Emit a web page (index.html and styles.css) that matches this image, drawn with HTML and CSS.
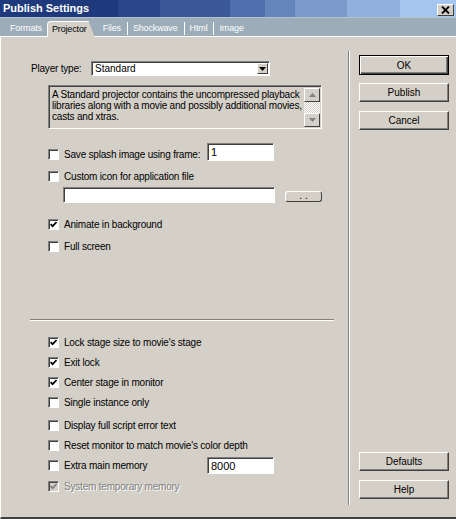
FILE: index.html
```html
<!DOCTYPE html>
<html>
<head>
    <meta name="viewport" content="width=device-width, initial-scale=1.0">
    <link rel="stylesheet" href="styles.css">
</head>
<body>

<div class="window">
    <div class="titlebar">
        <span class="title">Publish Settings</span>
        <span class="close">
            <svg width="9" height="8" viewBox="0 0 9 8"><path d="M1 0.5 L8 7.5 M8 0.5 L1 7.5" stroke="#000" stroke-width="1.8"/></svg>
        </span>
    </div>

    <div class="tabs">
        <span class="tab first">Formats</span>
        <span class="tab active">Projector</span>
        <span class="tab files">Files</span><span class="sep"></span>
        <span class="tab">Shockwave</span><span class="sep"></span>
        <span class="tab">Html</span><span class="sep"></span>
        <span class="tab">Image</span>
    </div>

    <div class="main">
        <div class="left">
            <div class="player">
                <span class="player-label">Player type:</span>
                <div class="select">
                    <span class="select-text">Standard</span>
                    <span class="select-btn">
                        <svg width="7" height="4" viewBox="0 0 7 4"><path d="M0 0 H7 L3.5 4 Z" fill="#000"/></svg>
                    </span>
                </div>
            </div>

            <div class="desc">
                <div class="desc-text">A Standard projector contains the uncompressed playback libraries along with a movie and possibly additional movies, casts and xtras.</div>
                <div class="scroll">
                    <span class="scroll-btn"><svg width="7" height="4" viewBox="0 0 7 4"><path d="M0 4 H7 L3.5 0 Z" fill="#808080"/></svg></span>
                    <span class="scroll-track"></span>
                    <span class="scroll-btn"><svg width="7" height="4" viewBox="0 0 7 4"><path d="M0 0 H7 L3.5 4 Z" fill="#808080"/></svg></span>
                </div>
            </div>

            <div class="check splash">
                <span class="box"></span>
                <span class="label wide">Save splash image using frame:</span>
                <span class="field up">1</span>
            </div>
            <div class="check custom">
                <span class="box"></span>
                <span class="label">Custom icon for application file</span>
            </div>
            <div class="path-row">
                <span class="path-field"></span>
                <span class="browse">. .</span>
            </div>
            <div class="check animate">
                <span class="box"><svg width="7" height="7" viewBox="0 0 7 7"><polyline points="0.6,3.2 2.6,5.2 6.6,1" fill="none" stroke="#000" stroke-width="1.7"/></svg></span>
                <span class="label">Animate in background</span>
            </div>
            <div class="check gap11">
                <span class="box"></span>
                <span class="label">Full screen</span>
            </div>

            <div class="rule"></div>

            <div class="check lock">
                <span class="box"><svg width="7" height="7" viewBox="0 0 7 7"><polyline points="0.6,3.2 2.6,5.2 6.6,1" fill="none" stroke="#000" stroke-width="1.7"/></svg></span>
                <span class="label">Lock stage size to movie's stage</span>
            </div>
            <div class="check gap9">
                <span class="box"><svg width="7" height="7" viewBox="0 0 7 7"><polyline points="0.6,3.2 2.6,5.2 6.6,1" fill="none" stroke="#000" stroke-width="1.7"/></svg></span>
                <span class="label">Exit lock</span>
            </div>
            <div class="check gap9">
                <span class="box"><svg width="7" height="7" viewBox="0 0 7 7"><polyline points="0.6,3.2 2.6,5.2 6.6,1" fill="none" stroke="#000" stroke-width="1.7"/></svg></span>
                <span class="label">Center stage in monitor</span>
            </div>
            <div class="check gap9">
                <span class="box"></span>
                <span class="label">Single instance only</span>
            </div>
            <div class="check gap12">
                <span class="box"></span>
                <span class="label">Display full script error text</span>
            </div>
            <div class="check gap9">
                <span class="box"></span>
                <span class="label">Reset monitor to match movie's color depth</span>
            </div>
            <div class="check gap9">
                <span class="box"></span>
                <span class="label wide">Extra main memory</span>
                <span class="field">8000</span>
            </div>
            <div class="check gap10 disabled">
                <span class="box"><svg width="7" height="7" viewBox="0 0 7 7"><polyline points="0.6,3.2 2.6,5.2 6.6,1" fill="none" stroke="#808080" stroke-width="1.7"/></svg></span>
                <span class="label">System temporary memory</span>
            </div>
        </div>

        <div class="right">
            <div class="btn-group">
                <div class="btn default">OK</div>
                <div class="btn">Publish</div>
                <div class="btn">Cancel</div>
            </div>
            <div class="btn-group">
                <div class="btn">Defaults</div>
                <div class="btn">Help</div>
            </div>
        </div>
    </div>
</div>

</body>
</html>
```

FILE: styles.css
```css
* {box-sizing: border-box;}

body {
    margin: 0;
    font-family: "Liberation Sans", Arial, sans-serif;
    font-size: 10px;
    color: #000;
    background-color: #d4d0c8;
}

.window {
    width: 456px;
    height: 519px;
    border-left: 1px solid #ffffff;
    border-bottom: 2px solid #404040;
    background-color: #d4d0c8;
}

/* title bar with the stepped blue fade */
.titlebar {
    height: 17px;
    margin-left: -1px;
    display: flex;
    justify-content: space-between;
    align-items: flex-start;
    padding: 2px 2px 0 3px;
    background: linear-gradient(to right,
        #1f3a7c 0 118px,
        #29468a 118px 160px,
        #3a5796 160px 230px,
        #4f6eac 230px 265px,
        #6484bc 265px 295px,
        #7a9bca 295px 347px,
        #90b1dd 347px 400px,
        #a4c6ef 400px);
}

.title {
    color: #ffffff;
    font-size: 11px;
    font-weight: bold;
    line-height: 13px;
}

.close {
    width: 17px;
    height: 12px;
    margin-top: 2px;
    display: flex;
    align-items: center;
    justify-content: center;
    background-color: #d4d0c8;
    border: 1px solid;
    border-color: #ffffff #404040 #404040 #ffffff;
}

/* tab strip */
.tabs {
    height: 20px;
    margin-left: -1px;
    display: flex;
    align-items: flex-end;
    padding-left: 10px;
    background-color: #9cacb8;
    border-top: 1px solid #b4c2cc;
    border-bottom: 1px solid #ffffff;
}

.tab {
    color: #ffffff;
    font-size: 9px;
    line-height: 15px;
    letter-spacing: -0.15px;
    white-space: nowrap;
}

.tab.active {
    position: relative;
    margin: 0 0 -1px 5px;
    padding: 0 8px 1px 4px;
    color: #000;
    background-color: #d4d0c8;
    border-top: 1px solid #ffffff;
    border-left: 1px solid #ffffff;
    border-top-left-radius: 4px;
    clip-path: polygon(0 0, calc(100% - 6px) 0, 100% 100%, 0 100%);
    line-height: 14px;
}

.tab.files {
    margin-left: 8px;
}

.sep {
    width: 1px;
    height: 13px;
    margin: 0 5px 1px 6px;
    background-color: #ffffff;
}

.main {
    display: flex;
    height: 480px;
}

.left {
    width: 347px;
}

/* player type */
.player {
    display: flex;
    align-items: center;
    height: 15px;
    margin: 24px 0 0 30px;
}

.player-label {
    width: 60px;
    letter-spacing: -0.2px;
}

.select {
    width: 179px;
    height: 15px;
    display: flex;
    align-items: center;
    justify-content: space-between;
    background-color: #ffffff;
    border: 1px solid;
    border-color: #808080 #ffffff #ffffff #808080;
    box-shadow: inset 1px 1px #404040;
    padding: 0 1px 0 3px;
}

.select-btn {
    width: 11px;
    height: 11px;
    display: flex;
    align-items: center;
    justify-content: center;
    background-color: #d4d0c8;
    border: 1px solid;
    border-color: #ffffff #404040 #404040 #ffffff;
}

/* description box */
.desc {
    display: flex;
    justify-content: space-between;
    width: 274px;
    height: 44px;
    margin: 9px 0 0 47px;
    border: 1px solid;
    border-color: #808080 #ffffff #ffffff #808080;
    box-shadow: inset 1px 1px #404040;
    padding: 2px 1px 1px 3px;
}

.desc-text {
    width: 252px;
    line-height: 11px;
    letter-spacing: -0.2px;
    padding-top: 1px;
}

.scroll {
    width: 16px;
    display: flex;
    flex-direction: column;
}

.scroll-btn {
    height: 14px;
    display: flex;
    align-items: center;
    justify-content: center;
    background-color: #d4d0c8;
    border: 1px solid;
    border-color: #ffffff #404040 #404040 #ffffff;
}

.scroll-track {
    flex: 1;
    background-image: repeating-conic-gradient(#ffffff 0 25%, #d4d0c8 0 50%);
    background-size: 2px 2px;
}

/* check rows */
.check {
    display: flex;
    align-items: center;
    height: 11px;
    margin-left: 47px;
}

.box {
    width: 11px;
    height: 11px;
    flex-shrink: 0;
    display: flex;
    align-items: center;
    justify-content: center;
    background-color: #ffffff;
    border: 1px solid;
    border-color: #808080 #ffffff #ffffff #808080;
    box-shadow: inset 1px 1px #404040;
}

.label {
    margin-left: 5px;
    line-height: 11px;
    letter-spacing: -0.2px;
    white-space: nowrap;
}

.label.wide {
    width: 143px;
}

.field {
    width: 67px;
    height: 17px;
    flex-shrink: 0;
    padding: 2px 3px;
    font-size: 11px;
    line-height: 12px;
    background-color: #ffffff;
    border: 1px solid;
    border-color: #808080 #ffffff #ffffff #808080;
    box-shadow: inset 1px 1px #404040;
}

.field.up {
    height: 18px;
    margin-bottom: 5px;
}

.splash { margin-top: 20px; }
.custom { margin-top: 11px; }
.animate { margin-top: 16px; }
.gap9 { margin-top: 9px; }
.gap10 { margin-top: 10px; }
.gap11 { margin-top: 11px; }
.gap12 { margin-top: 12px; }

.path-row {
    display: flex;
    align-items: flex-start;
    height: 16px;
    margin: 5px 0 0 62px;
}

.path-field {
    width: 212px;
    height: 16px;
    background-color: #ffffff;
    border: 1px solid;
    border-color: #808080 #ffffff #ffffff #808080;
    box-shadow: inset 1px 1px #404040;
}

.browse {
    width: 37px;
    height: 11px;
    margin: 4px 0 0 10px;
    text-align: center;
    line-height: 7px;
    background-color: #d4d0c8;
    border: 1px solid;
    border-color: #ffffff #404040 #404040 #ffffff;
    border-radius: 3px;
}

.rule {
    width: 304px;
    height: 2px;
    margin: 67px 0 0 29px;
    border-top: 1px solid #808080;
    border-bottom: 1px solid #ffffff;
}

.lock { margin-top: 16px; }

.disabled .box {
    background-color: #d4d0c8;
}

.disabled .label {
    color: #808080;
    text-shadow: 1px 1px #ffffff;
}

/* button column */
.right {
    width: 107px;
    margin: 14px 0 12px 0;
    padding: 4px 0 6px 10px;
    border-left: 1px solid #808080;
    box-shadow: inset 1px 0 #ffffff;
    display: flex;
    flex-direction: column;
    justify-content: space-between;
}

.btn-group {
    display: flex;
    flex-direction: column;
    gap: 9px;
}

.btn {
    width: 90px;
    height: 19px;
    display: flex;
    align-items: center;
    justify-content: center;
    background-color: #d4d0c8;
    border: 1px solid;
    border-color: #ffffff #404040 #404040 #ffffff;
    box-shadow: inset -1px -1px #808080;
}

.btn.default {
    height: 20px;
    margin-bottom: -1px;
    border: 1px solid #000;
    box-shadow: inset 1px 1px #ffffff, inset -1px -1px #404040, inset -2px -2px #808080;
}
```
